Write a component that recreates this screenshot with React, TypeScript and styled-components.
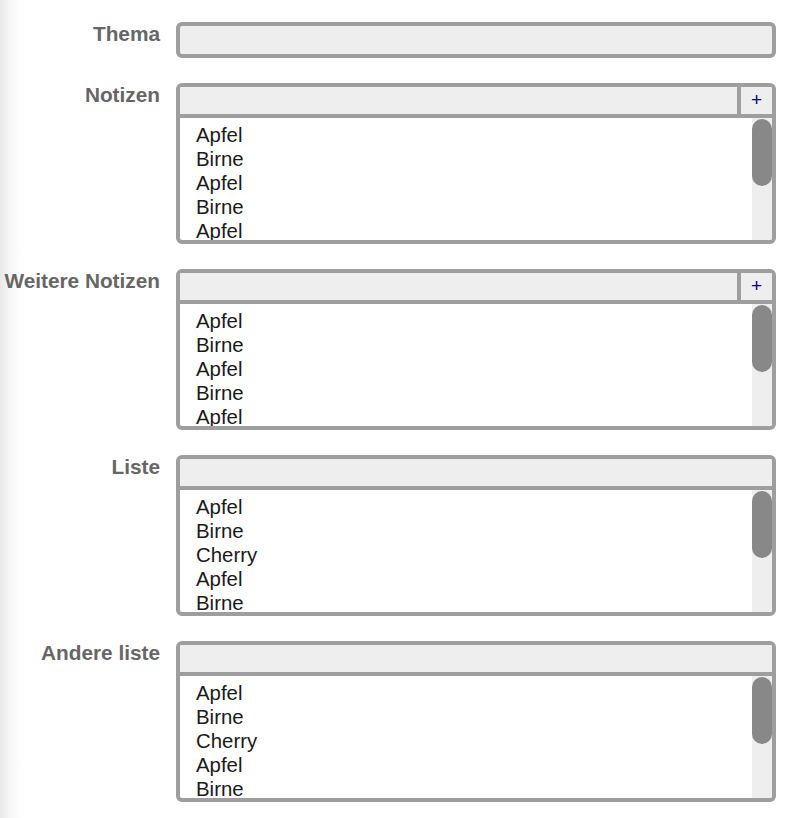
import React from "react";
import styled, { createGlobalStyle } from "styled-components";

const GlobalStyle = createGlobalStyle`
  html, body {
    margin: 0;
    padding: 0;
  }
  body {
    font-family: "Liberation Sans", Arial, sans-serif;
    background: linear-gradient(to right, #e9e9e9 0px, #f7f7f7 10px, #ffffff 22px) fixed;
    min-height: 818px;
  }
`;

const Form = styled.div`
  display: grid;
  grid-template-columns: 160px 600px;
  column-gap: 16px;
  row-gap: 25px;
  padding-top: 22px;
  align-items: start;
`;

const Label = styled.label`
  font-family: "Liberation Sans", Arial, sans-serif;
  font-weight: bold;
  font-size: 20.8px;
  line-height: 24px;
  color: #666666;
  text-align: right;
  white-space: nowrap;
`;

const TextBox = styled.input`
  box-sizing: border-box;
  display: block;
  width: 100%;
  height: 36px;
  margin: 0;
  padding: 0 8px;
  border: 4px solid #9e9e9e;
  border-radius: 6px;
  background: #eeeeee;
  font-family: "Liberation Sans", Arial, sans-serif;
  font-size: 18px;
  outline: none;
`;

const ListField = styled.div`
  box-sizing: border-box;
  display: flex;
  flex-direction: column;
  width: 100%;
  border: 4px solid #9e9e9e;
  border-radius: 6px;
  overflow: hidden;
  background: #ffffff;
`;

const HeaderRow = styled.div`
  display: flex;
  height: 27px;
  border-bottom: 4px solid #9e9e9e;
  background: #eeeeee;
`;

const HeaderInput = styled.input`
  flex: 1;
  min-width: 0;
  margin: 0;
  padding: 0 8px;
  border: none;
  background: #eeeeee;
  font-family: "Liberation Sans", Arial, sans-serif;
  font-size: 18px;
  outline: none;
`;

const AddButton = styled.button`
  width: 35px;
  flex: none;
  margin: 0;
  padding: 0 0 1px 0;
  border: none;
  border-left: 4px solid #9e9e9e;
  background: #eeeeee;
  color: #000080;
  font-family: "Liberation Sans", Arial, sans-serif;
  font-size: 19px;
  line-height: 26px;
  cursor: pointer;
`;

const Body = styled.div`
  display: flex;
  height: 122px;
`;

const Items = styled.ul`
  flex: 1;
  list-style: none;
  margin: 0;
  padding: 5px 0 0 16px;
  box-sizing: border-box;
  overflow: hidden;
  font-family: "Liberation Sans", Arial, sans-serif;
  font-size: 20.4px;
  line-height: 24px;
  color: #1a1a1a;
`;

const Item = styled.li`
  white-space: nowrap;
`;

const ScrollTrack = styled.div`
  width: 20px;
  flex: none;
  background: #eeeeee;
  display: flex;
  flex-direction: column;
`;

const ScrollThumb = styled.div<{ $h: number }>`
  height: ${(p) => p.$h}px;
  margin-top: 1px;
  background: #888888;
  border-radius: 10px;
`;

type ListProps = { items: string[]; addable?: boolean };

const ListBox: React.FC<ListProps> = ({ items, addable }) => (
  <ListField>
    <HeaderRow>
      <HeaderInput />
      {addable && <AddButton>+</AddButton>}
    </HeaderRow>
    <Body>
      <Items>
        {items.map((it, i) => (
          <Item key={i}>{it}</Item>
        ))}
      </Items>
      <ScrollTrack>
        <ScrollThumb $h={67} />
      </ScrollTrack>
    </Body>
  </ListField>
);

const notes = ["Apfel", "Birne", "Apfel", "Birne", "Apfel"];
const fruits = ["Apfel", "Birne", "Cherry", "Apfel", "Birne"];

export default function App() {
  return (
    <>
      <GlobalStyle />
      <Form>
        <Label>Thema</Label>
        <TextBox />
        <Label>Notizen</Label>
        <ListBox items={notes} addable />
        <Label>Weitere Notizen</Label>
        <ListBox items={notes} addable />
        <Label>Liste</Label>
        <ListBox items={fruits} />
        <Label>Andere liste</Label>
        <ListBox items={fruits} />
      </Form>
    </>
  );
}
